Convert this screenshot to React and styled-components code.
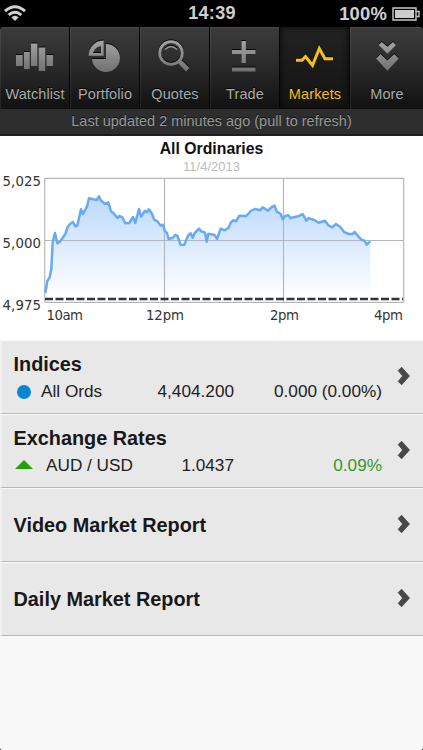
import styled, { createGlobalStyle } from "styled-components";

const GlobalStyle = createGlobalStyle`
* { box-sizing: border-box; }
body {
margin: 0;
background: #000;
font-family: "Liberation Sans", Arial, sans-serif;
}
`

const linePoints = "45.3,293 47.3,281 49.7,277.3 51.3,269 52.7,242.3 55,233 57.3,243.3 60,241.7 65.3,234 67.7,227 70,224 73,222 75.3,226.3 77.3,225.7 81,209.3 83,214 87,206.7 89,198.3 93,199.3 96.7,200 99,196.3 100.7,200.3 105,204 108.3,202.3 111,211.3 114.3,214 117.3,218 119.3,216 122.3,217.3 125.3,223.3 129.3,223 133,217 135.3,223 139,209 141,216.7 145,210.7 147,212.3 149,209.3 151.7,213.3 154.3,219.7 157.7,221.7 160.7,225.7 163,224.7 165,231.3 167,233 168.7,239 173,237.7 175,235 177.3,235.7 180.7,245 184.3,244.7 188,235.7 190.7,233.3 192.7,237.7 194.7,233 199,228.7 200.7,231 205,232.7 206.7,241.7 208.3,233.7 214.7,235 217,239 220.7,228.7 224.7,230.3 228.7,227.7 230.7,222.7 233,220.3 236,221.3 239.3,215.7 246.3,216 250.7,211 254.7,209 260.3,210.3 262.7,207.3 268,210.7 271.7,207 274.7,205.7 276.7,211.7 280.7,214 282.7,219.3 285.3,216 288.3,215.3 290.3,218 298.3,216.3 302.7,214 306.3,220.7 308.3,218.3 314.3,220 318.7,222.7 325,220.7 328.3,225.3 332.3,227.3 336,224 340.3,227 344.3,232.3 349,234 352.7,234 354.7,232 358.7,237 362,240 364.7,240.7 366.7,244.7 370.3,241.3"

const yLabels = [
    { text: "5,025", y: 186 },
    { text: "5,000", y: 247.7 },
    { text: "4,975", y: 309.5 },
]
const xLabels = [
    { text: "10am", x: 46.5, width: 36.5 },
    { text: "12pm", x: 146, width: 38 },
    { text: "2pm", x: 270, width: 29 },
    { text: "4pm", x: 374, width: 29 },
]

const WatchlistIcon = () => (
    <path d="M16 55h6.7v11h-6.7zM24 52h5.8v17h-5.8zM31 43.5h6.4v22.5h-6.4zM38.6 47.5h6.7v23.5h-6.7zM46.4 55h6.7v11h-6.7z" />
)
const PortfolioIcon = () => (
    <g>
        <path d="M36 44A14 14 0 1 1 22 59H36Z" />
        <path fillRule="evenodd" d="M33.7 40.5V55.7H18.5A15.2 15.2 0 0 1 33.7 40.5ZM31 46A10.5 10.5 0 0 0 23 53H31Z" />
    </g>
)
const QuotesIcon = () => (
    <g>
        <circle cx="31" cy="53" r="11.3" fill="none" stroke="url(#metal)" strokeWidth="2.8" />
        <path d="M38 63L41.3 60L49.5 68L46 71.5Z" />
        <path d="M25 49.5Q31 43.5 37 49.5" fill="none" stroke="url(#metal)" strokeWidth="1.5" />
    </g>
)
const TradeIcon = () => (
    <path d="M31.5 41h4.4v9h9.6v4h-9.6v9h-4.4v-9h-9.5v-4h9.5zM22 67.5h23.5v4h-23.5z" />
)
const MarketsIcon = () => (
    <path d="M16 60.3H22L25.5 56.5L32.5 65.3L39.3 48.5L45 58.8H53" fill="none" stroke="#f5c211" strokeWidth="3" />
)
const MoreIcon = () => (
    <path d="M28.7 45L31.7 42L37.4 46.8L43 42L46 45L37.4 53.7ZM26 58.5L30.5 54L37.4 60.5L44.3 54L48.8 58.5L37.4 70.7Z" />
)

const tabs = [
    { name: "Watchlist", icon: <WatchlistIcon /> },
    { name: "Portfolio", icon: <PortfolioIcon /> },
    { name: "Quotes", icon: <QuotesIcon /> },
    { name: "Trade", icon: <TradeIcon /> },
    { name: "Markets", icon: <MarketsIcon />, active: true },
    { name: "More", icon: <MoreIcon /> },
]

const Chart = () => (
    <ChartSvg viewBox="0 174 423 166">
        <defs>
            <linearGradient id="area" x1="0" y1="196" x2="0" y2="298" gradientUnits="userSpaceOnUse">
                <stop offset="0" stopColor="#bcd9fc" />
                <stop offset="1" stopColor="#bcd9fc" stopOpacity="0" />
            </linearGradient>
        </defs>
        <polygon points={`45.3,298 ${linePoints} 370.3,298`} fill="url(#area)" />
        <path d="M44.5 178.3H404M44.5 240.5H404M44.5 302.3H404M44.7 178V302M164.5 178V302M283.5 178V302M403.7 178V302" stroke="#b4b8bd" strokeWidth="1.2" fill="none" />
        <path d="M45 299H403" stroke="#333" strokeWidth="2.4" strokeDasharray="8 2.5" />
        <polyline points={linePoints} fill="none" stroke="#6aaaf3" strokeWidth="2.5" strokeLinejoin="round" />
        {yLabels.map(label => (
            <AxisText key={label.text} x="2.5" y={label.y} textLength="38.5">{label.text}</AxisText>
        ))}
        {xLabels.map(label => (
            <AxisText key={label.text} x={label.x} y="320.3" textLength={label.width}>{label.text}</AxisText>
        ))}
    </ChartSvg>
)

const Arrow = () => (
    <ArrowSvg viewBox="0 0 13 20">
        <path d="M1.2 4.6L4.6 1.2L12.5 10L4.6 18.8L1.2 15.4L5.6 10Z" fill="#484848" stroke="#484848" strokeWidth="0.8" strokeLinejoin="round" />
    </ArrowSvg>
)

const App = () => {
    return (
        <Screen>
            <GlobalStyle />
            <StatusBar>
                <WifiSvg viewBox="0 0 22 17">
                    <g fill="none" stroke="#d2d2d2" strokeWidth="2.9">
                        <path d="M1 6.2Q11 -2.6 21 6.2" />
                        <path d="M4.7 10Q11 4.4 17.3 10" />
                    </g>
                    <path d="M7.3 12.3Q11 9.3 14.7 12.3L11 16Z" fill="#d2d2d2" />
                </WifiSvg>
                <Clock>14:39</Clock>
                <Battery>
                    100%
                    <BatterySvg viewBox="0 0 28 14">
                        <path d="M1 1H24V13H1Z" fill="none" stroke="#ccc" strokeWidth="1.4" />
                        <path d="M3 3H22V11H3Z" fill="#ccc" />
                        <path d="M24.5 4.5H27V9.5H24.5" fill="none" stroke="#ccc" strokeWidth="1.3" />
                    </BatterySvg>
                </Battery>
            </StatusBar>
            <TabBar>
                {tabs.map(tab => (
                    <Tab key={tab.name} $active={tab.active}>
                        <TabIcon viewBox="0 32 70 48">
                            <defs>
                                <linearGradient id="metal" x1="0" y1="40" x2="0" y2="72" gradientUnits="userSpaceOnUse">
                                    <stop offset="0" stopColor="#a5a5a5" />
                                    <stop offset="1" stopColor="#707070" />
                                </linearGradient>
                            </defs>
                            <g fill="url(#metal)">{tab.icon}</g>
                        </TabIcon>
                        <TabName>{tab.name}</TabName>
                    </Tab>
                ))}
            </TabBar>
            <UpdateBar>Last updated 2 minutes ago (pull to refresh)</UpdateBar>
            <Content>
                <ChartTitle>All Ordinaries</ChartTitle>
                <ChartDate>11/4/2013</ChartDate>
                <Chart />
                <Row>
                    <RowBody>
                        <RowTitle>Indices</RowTitle>
                        <Quote>
                            <Mark $width={28}><Dot /></Mark>
                            <Label>All Ords</Label>
                            <Value>4,404.200</Value>
                            <Change>0.000 (0.00%)</Change>
                        </Quote>
                    </RowBody>
                    <Arrow />
                </Row>
                <Row>
                    <RowBody>
                        <RowTitle>Exchange Rates</RowTitle>
                        <Quote>
                            <Mark $width={33}><UpTriangle /></Mark>
                            <Label>AUD / USD</Label>
                            <Value>1.0437</Value>
                            <Change $up>0.09%</Change>
                        </Quote>
                    </RowBody>
                    <Arrow />
                </Row>
                <Row>
                    <RowBody><RowTitle>Video Market Report</RowTitle></RowBody>
                    <Arrow />
                </Row>
                <Row>
                    <RowBody><RowTitle>Daily Market Report</RowTitle></RowBody>
                    <Arrow />
                </Row>
            </Content>
        </Screen>
    );
}

const Screen = styled.div`
width: 423px;
height: 750px;
display: flex;
flex-direction: column;
overflow: hidden;
`
const StatusBar = styled.div`
height: 27px;
flex: none;
display: grid;
grid-template-columns: 1fr auto 1fr;
align-items: center;
padding: 0 3px 0 4px;
background: #000;
color: #d0d0d0;
font-size: 18px;
font-weight: bold;
`
const WifiSvg = styled.svg`
width: 22px;
height: 17px;
`
const Clock = styled.div`
letter-spacing: 0.3px;
`
const Battery = styled.div`
display: flex;
align-items: center;
justify-content: flex-end;
gap: 5px;
font-size: 18.4px;
letter-spacing: 0.2px;
`
const BatterySvg = styled.svg`
width: 28px;
height: 14px;
`
const TabBar = styled.div`
height: 82px;
flex: none;
display: grid;
grid-template-columns: repeat(5, 70px) 73px;
border-radius: 4px 4px 0 0;
overflow: hidden;
`
const Tab = styled.div`
display: flex;
flex-direction: column;
padding-top: 5px;
background: ${props => props.$active ? "linear-gradient(#222, #191919 60%, #131313)" : "linear-gradient(#3c3c3c, #292929 50%, #111)"};
border-right: 1px solid #050505;
box-shadow: ${props => props.$active ? "inset 0 0 6px #080808" : "inset 0 1px #484848, inset 1px 0 rgba(255,255,255,0.07)"};
color: ${props => props.$active ? "#f5c211" : "#ababab"};
&:last-child { border-right: 0; }
`
const TabIcon = styled.svg`
width: 70px;
height: 48px;
filter: drop-shadow(0 -1px 0 #080808);
`
const TabName = styled.div`
padding-left: 1px;
margin-top: 5px;
line-height: 18px;
font-size: 14.5px;
letter-spacing: 0.1px;
text-align: center;
text-shadow: 0 -1px #000;
`
const UpdateBar = styled.div`
height: 27px;
flex: none;
background: #2e2e2e;
border-bottom: 2px solid #1f1d1f;
color: #989898;
font-size: 14.5px;
line-height: 25px;
text-align: center;
text-shadow: 0 -1px #111;
`
const Content = styled.div`
flex: 1;
display: flex;
flex-direction: column;
background: #f8f8f8;
border-radius: 0 0 2px 2px;
`
const ChartTitle = styled.div`
height: 22px;
background: #fff;
color: #111;
font-size: 15.8px;
font-weight: bold;
line-height: 25px;
text-align: center;
`
const ChartDate = styled.div`
height: 16px;
background: #fff;
color: #bcbcbc;
font-size: 13px;
line-height: 18px;
text-align: center;
`
const ChartSvg = styled.svg`
display: block;
flex: none;
width: 423px;
height: 166px;
background: #fff;
`
const AxisText = styled.text`
font-family: "DejaVu Sans", Verdana, sans-serif;
font-size: 13.3px;
fill: #333;
`
const Row = styled.div`
height: 74px;
flex: none;
display: flex;
align-items: center;
padding: 0 13px 0 11px;
background: #e8e8e8;
border-left: 2px solid #f1f1f1;
border-top: 1px solid #fafafa;
border-bottom: 1px solid #bababa;
`
const RowBody = styled.div`
width: 369px;
margin-right: 15px;
`
const RowTitle = styled.div`
padding-left: 0.5px;
color: #181818;
font-size: 19.85px;
font-weight: bold;
line-height: 25px;
`
const Quote = styled.div`
display: grid;
grid-template-columns: auto auto 1fr 148px;
align-items: center;
height: 26px;
margin-top: 2px;
margin-bottom: -2px;
color: #222;
font-size: 17.2px;
`
const Mark = styled.div`
width: ${props => props.$width}px;
`
const Dot = styled.div`
width: 14px;
height: 14px;
margin-left: 4px;
border-radius: 50%;
background: #0786d2;
`
const UpTriangle = styled.div`
width: 0;
height: 0;
margin: -2px 0 0 2px;
border-left: 9px solid transparent;
border-right: 9px solid transparent;
border-bottom: 9px solid #24a00c;
`
const Label = styled.div``
const Value = styled.div`
text-align: right;
`
const Change = styled.div`
text-align: right;
color: ${props => props.$up ? "#35982a" : "#222"};
`
const ArrowSvg = styled.svg`
width: 13px;
height: 20px;
margin-top: -2px;
`

export default App;
